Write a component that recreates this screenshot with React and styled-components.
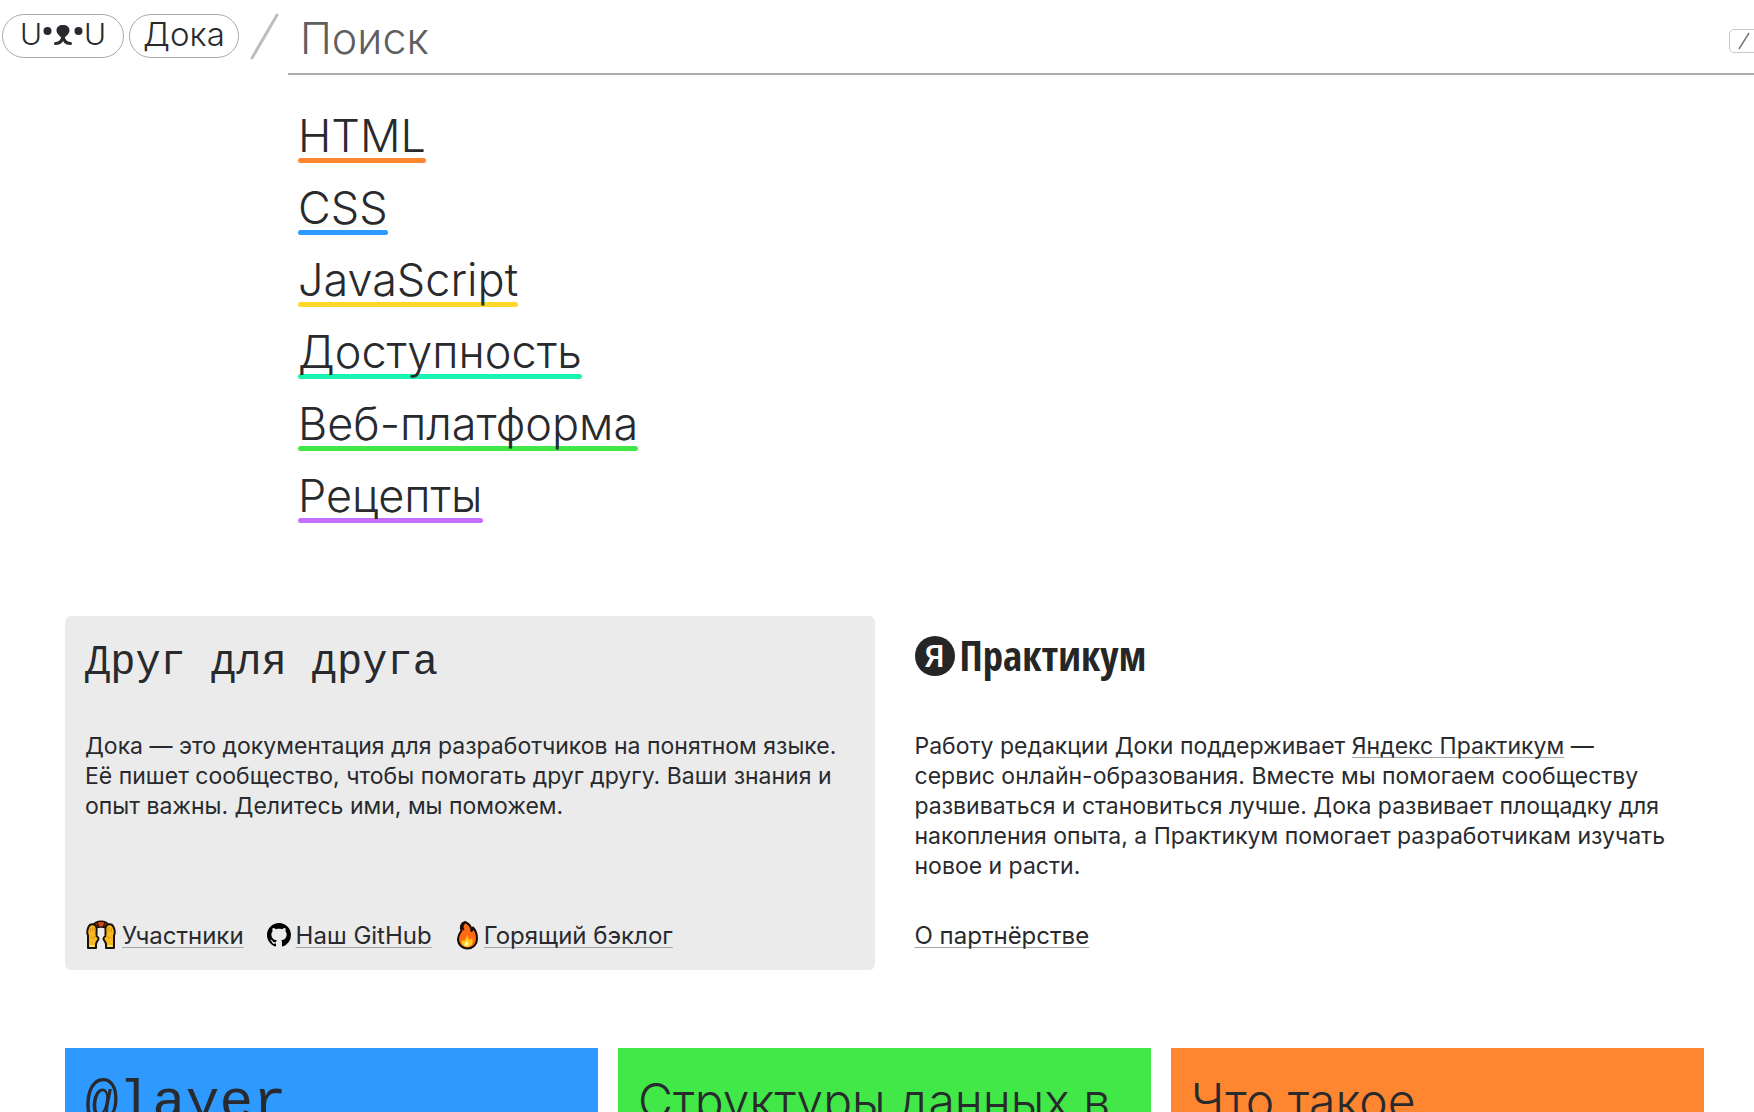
import React from "react";
import styled, { createGlobalStyle } from "styled-components";

const sans = `"Inter", "Noto Sans", sans-serif`;
const mono = `"Liberation Mono", "DejaVu Sans Mono", monospace`;
const ink = "#282a2e";

const GlobalStyle = createGlobalStyle`
  *, *::before, *::after { box-sizing: border-box; }
  body { margin: 0; background: #fff; color: ${ink}; font-family: ${sans}; }
  h1, h2, p, ul { margin: 0; padding: 0; font-weight: inherit; }
`;

const Page = styled.div`
  height: 100vh;
  overflow: hidden;
`;

const Header = styled.header`
  display: flex;
  align-items: flex-start;
  height: 75px;
  padding-left: 2px;
`;

const Pill = styled.a`
  display: flex;
  align-items: center;
  justify-content: center;
  flex: none;
  width: ${(p) => p.$width}px;
  height: 44px;
  margin: 14px 5px 0 0;
  padding-bottom: 4px;
  border: 1px solid #a9aaab;
  border-radius: 22px;
  color: ${ink};
  font-size: ${(p) => p.$size}px;
  line-height: 38px;
  font-weight: 300;
  text-decoration: none;
`;

const HeaderSlash = styled.svg`
  flex: none;
  width: 44px;
  height: 48px;
  margin-top: 12px;
`;

const SearchForm = styled.form`
  display: flex;
  flex: 1;
  align-items: center;
  height: 75px;
  margin-right: -12px;
  border-bottom: 2px solid #acacac;
`;

const SearchInput = styled.input`
  flex: 1;
  min-width: 0;
  height: 73px;
  padding: 2px 12px 0;
  border: 0;
  outline: 0;
  background: none;
  color: ${ink};
  font: 300 43px/48px ${sans};

  &::placeholder { color: #5e5f61; opacity: 1; }
`;

const Key = styled.kbd`
  display: flex;
  align-items: center;
  justify-content: center;
  width: 30px;
  height: 24px;
  margin: 8px 7px 0 0;
  border: 1px solid #c8c8c9;
  border-radius: 5px;
  color: #77787a;
`;

const Sections = styled.ul`
  display: flex;
  flex-direction: column;
  align-items: flex-start;
  padding: 25px 0 0 298px;
  list-style: none;
`;

const SectionItem = styled.li`
  height: 72px;
`;

const SectionLink = styled.a`
  position: relative;
  z-index: 0;
  display: block;
  height: 63px;
  padding-top: 8px;
  color: ${ink};
  font-size: 45px;
  line-height: 56px;
  font-weight: 300;
  text-decoration: none;

  &::after {
    content: "";
    position: absolute;
    z-index: -1;
    inset: auto 0 0;
    height: 5px;
    border-radius: 3px;
    background: ${(p) => p.$color};
  }
`;

const Content = styled.main`
  padding: 0 50px 0 65px;
`;

const Intro = styled.section`
  display: grid;
  grid-template-columns: 1fr 1fr;
  gap: 20px;
  margin-top: 84px;
`;

const Panel = styled.article`
  display: flex;
  flex-direction: column;
  min-height: 354px;
  padding: 20px 20px 18px;
  border-radius: 6px;
  background: ${(p) => (p.$filled ? "#ebebeb" : "transparent")};
`;

const PanelHead = styled.h2`
  height: 50px;
  margin-bottom: 45px;
  font: 400 42px/54px ${mono};
`;

const PanelText = styled.p`
  margin-bottom: auto;
  font-size: 23px;
  line-height: 30px;
`;

const Links = styled.div`
  display: flex;
  gap: 23px;
  height: 32px;
  font-size: 24px;
  line-height: 32px;
`;

const LinkItem = styled.span`
  display: flex;
  align-items: flex-start;
  gap: 5px;
`;

const TextLink = styled.a`
  color: ${ink};
  text-decoration: underline 1px #a5a6a8;
  text-decoration-skip-ink: none;
  text-underline-offset: 3px;
`;

const Icon = styled.svg`
  flex: none;
  width: ${(p) => p.$width}px;
  height: 30px;
`;

const Brand = styled.span`
  display: flex;
  align-items: flex-start;
  gap: 5px;
  height: 40px;
  color: #262626;
  font: 700 41px/38px "Open Sans Condensed", "Roboto Condensed", Roboto, sans-serif;
`;

const BrandMark = styled.span`
  display: flex;
  align-items: center;
  justify-content: center;
  width: 40px;
  height: 40px;
  border-radius: 50%;
  background: #262626;
  color: #fff;
  font: 500 32px/40px Roboto, sans-serif;
`;

const Articles = styled.section`
  display: grid;
  grid-template-columns: repeat(3, 1fr);
  gap: 20px;
  margin-top: 78px;
`;

const ArticleCard = styled.a`
  display: block;
  height: 320px;
  padding: 20px;
  background: ${(p) => p.$color};
  color: ${ink};
  font: ${(p) => (p.$code ? `400 56px/70px ${mono}` : `300 48px/66px ${sans}`)};
  text-decoration: none;
`;

const sections = [
  ["HTML", "#ff8630"],
  ["CSS", "#2e9aff"],
  ["JavaScript", "#ffd829"],
  ["Доступность", "#18f2b2"],
  ["Веб-платформа", "#41e847"],
  ["Рецепты", "#c56fff"],
];

const articles = [
  ["@layer", "#2e9aff", true],
  ["Структуры данных в", "#41e847", false],
  ["Что такое", "#ff8630", false],
];

function DogFace() {
  return (
    <svg width="42" height="32" viewBox="1 0 42 32" aria-hidden="true">
      <circle cx="6.500" cy="13" r="4" fill={ink} />
      <circle cx="37.500" cy="13" r="4" fill={ink} />
      <path d="M22 7c4 0 6.500 2 6.500 5.500 0 3-2.500 5-6.500 8.500-4-3.500-6.500-5.500-6.500-8.500C15.500 9 18 7 22 7z" fill={ink} />
      <path d="M22 18c-.5 5-3 7.500-7.500 7.500M22 18c.5 5 3 7.500 7.500 7.500" fill="none" stroke={ink} strokeWidth="3" strokeLinecap="round" />
    </svg>
  );
}

function HandsIcon() {
  const hand = "M3 28V15.500C1.800 14 2 10 3.500 7 4.500 4.500 7 4 9 4.500c2 .5 2.500 2 2.500 4v7c0 1.500 2 1 2 3 0 2.500-2.500 3-2.500 6V28z";
  return (
    <Icon $width={32} viewBox="0 0 32 30" aria-hidden="true">
      <path d="M7 6C9.500 2.200 12.500 1.200 16 1.200S22.500 2.200 25 6l-3.500 2.500c-3-2-8-2-11 0z" fill="#d44a12" stroke="#1b0d05" strokeWidth="1.500" />
      <path d="M12 2.500l1.500 4.500M20 2.500l-1.500 4.500" stroke="#1b0d05" strokeWidth="1.500" />
      {["", "translate(32 0) scale(-1 1)"].map((t) => (
        <g key={t} transform={t}>
          <path d={hand} fill="#f9b81f" stroke="#18130a" strokeWidth="2" strokeLinejoin="round" />
          <path d="M5.500 12V8M8 11V7M10 12V8M6 18c2 0 4-1 5-3" stroke="#e08a12" fill="none" />
          <path d="M4.500 26h5" stroke="#ffe05a" strokeWidth="2" />
        </g>
      ))}
    </Icon>
  );
}

function GithubIcon() {
  return (
    <Icon $width={24} viewBox="0 -2 16 20" aria-hidden="true">
      <path d="M8 0C3.58 0 0 3.58 0 8c0 3.54 2.29 6.53 5.47 7.59.4.07.55-.17.55-.38 0-.19-.01-.82-.01-1.49-2.01.37-2.53-.49-2.69-.94-.09-.23-.48-.94-.82-1.13-.28-.15-.68-.52-.01-.53.63-.01 1.08.58 1.23.82.72 1.21 1.87.87 2.33.66.07-.52.28-.87.51-1.07-1.78-.2-3.64-.89-3.64-3.95 0-.87.31-1.59.82-2.15-.08-.2-.36-1.02.08-2.12 0 0 .67-.21 2.2.82.64-.18 1.32-.27 2-.27s1.36.09 2 .27c1.53-1.04 2.2-.82 2.2-.82.44 1.1.16 1.92.08 2.12.51.56.82 1.27.82 2.15 0 3.07-1.87 3.75-3.65 3.95.29.25.54.73.54 1.48 0 1.07-.01 1.93-.01 2.2 0 .21.15.46.55.38A8.01 8.01 0 0 0 16 8c0-4.42-3.58-8-8-8z" />
    </Icon>
  );
}

function FireIcon() {
  return (
    <Icon $width={24} viewBox="0 0 24 30" aria-hidden="true">
      <path d="M10 2c5 2 6.500 5 6.500 9 1-.5 1.500-2 1.500-3.500 3 3 4 7 4 11.500 0 5.500-4 9.500-9.500 9.500S3 24.500 3 19c0-4 2-6 3.500-8.500C5 7 6 3 10 2z" fill="#ff6a13" stroke="#170d08" strokeWidth="2" strokeLinejoin="round" />
      <path d="M10 2.500C7.500 5 7 8 9 10" fill="none" stroke="#170d08" strokeWidth="1.500" />
      <path d="M12 15c1 3 2 4 3 5l2-2c2 5-.5 9-4.500 9S5.500 24 7 20l2 1c1.500-1.500 2.500-3.500 3-6z" fill="#ffc61c" />
      <path d="M12 21c2 1.500 2.500 5-.5 5s-2.500-3 .5-5z" fill="#fff6a0" />
    </Icon>
  );
}

export default function App() {
  return (
    <Page>
      <GlobalStyle />
      <Header>
        <Pill href="#home" $width={122} $size={30} aria-label="На главную">
          U<DogFace />U
        </Pill>
        <Pill href="#doka" $width={110} $size={33}>Дока</Pill>
        <HeaderSlash viewBox="0 0 44 48" aria-hidden="true">
          <path d="M8 46L33 3" stroke="#bdbdbe" strokeWidth="3" strokeLinecap="round" />
        </HeaderSlash>
        <SearchForm role="search">
          <SearchInput type="search" placeholder="Поиск" aria-label="Поиск" />
          <Key aria-label="/">
            <svg width="14" height="20" viewBox="0 0 14 20" aria-hidden="true">
              <path d="M2 18L12 2" stroke="#77787a" strokeWidth="1.500" />
            </svg>
          </Key>
        </SearchForm>
      </Header>

      <nav>
        <Sections>
          {sections.map(([title, color]) => (
            <SectionItem key={title}>
              <SectionLink href={`#${title}`} $color={color}>{title}</SectionLink>
            </SectionItem>
          ))}
        </Sections>
      </nav>

      <Content>
        <Intro>
          <Panel $filled>
            <PanelHead>Друг для друга</PanelHead>
            <PanelText>
              Дока — это документация для разработчиков на понятном языке. Её{"\u00a0"}пишет
              сообщество, чтобы помогать друг другу. Ваши знания и опыт важны. Делитесь ими,
              мы поможем.
            </PanelText>
            <Links>
              <LinkItem><HandsIcon /><TextLink href="#people">Участники</TextLink></LinkItem>
              <LinkItem><GithubIcon /><TextLink href="#github">Наш GitHub</TextLink></LinkItem>
              <LinkItem><FireIcon /><TextLink href="#backlog">Горящий бэклог</TextLink></LinkItem>
            </Links>
          </Panel>
          <Panel>
            <PanelHead>
              <Brand><BrandMark>Я</BrandMark>Практикум</Brand>
            </PanelHead>
            <PanelText>
              Работу редакции Доки поддерживает{" "}
              <TextLink href="#practicum">Яндекс Практикум</TextLink> —
              {" "}сервис{"\u00a0"}онлайн-образования. Вместе мы помогаем сообществу развиваться
              и становиться лучше. Дока развивает площадку для накопления опыта, а Практикум
              помогает разработчикам изучать новое и расти.
            </PanelText>
            <Links>
              <LinkItem><TextLink href="#partnership">О партнёрстве</TextLink></LinkItem>
            </Links>
          </Panel>
        </Intro>

        <Articles>
          {articles.map(([title, color, code]) => (
            <ArticleCard key={title} href={`#${title}`} $color={color} $code={code}>{title}</ArticleCard>
          ))}
        </Articles>
      </Content>
    </Page>
  );
}
